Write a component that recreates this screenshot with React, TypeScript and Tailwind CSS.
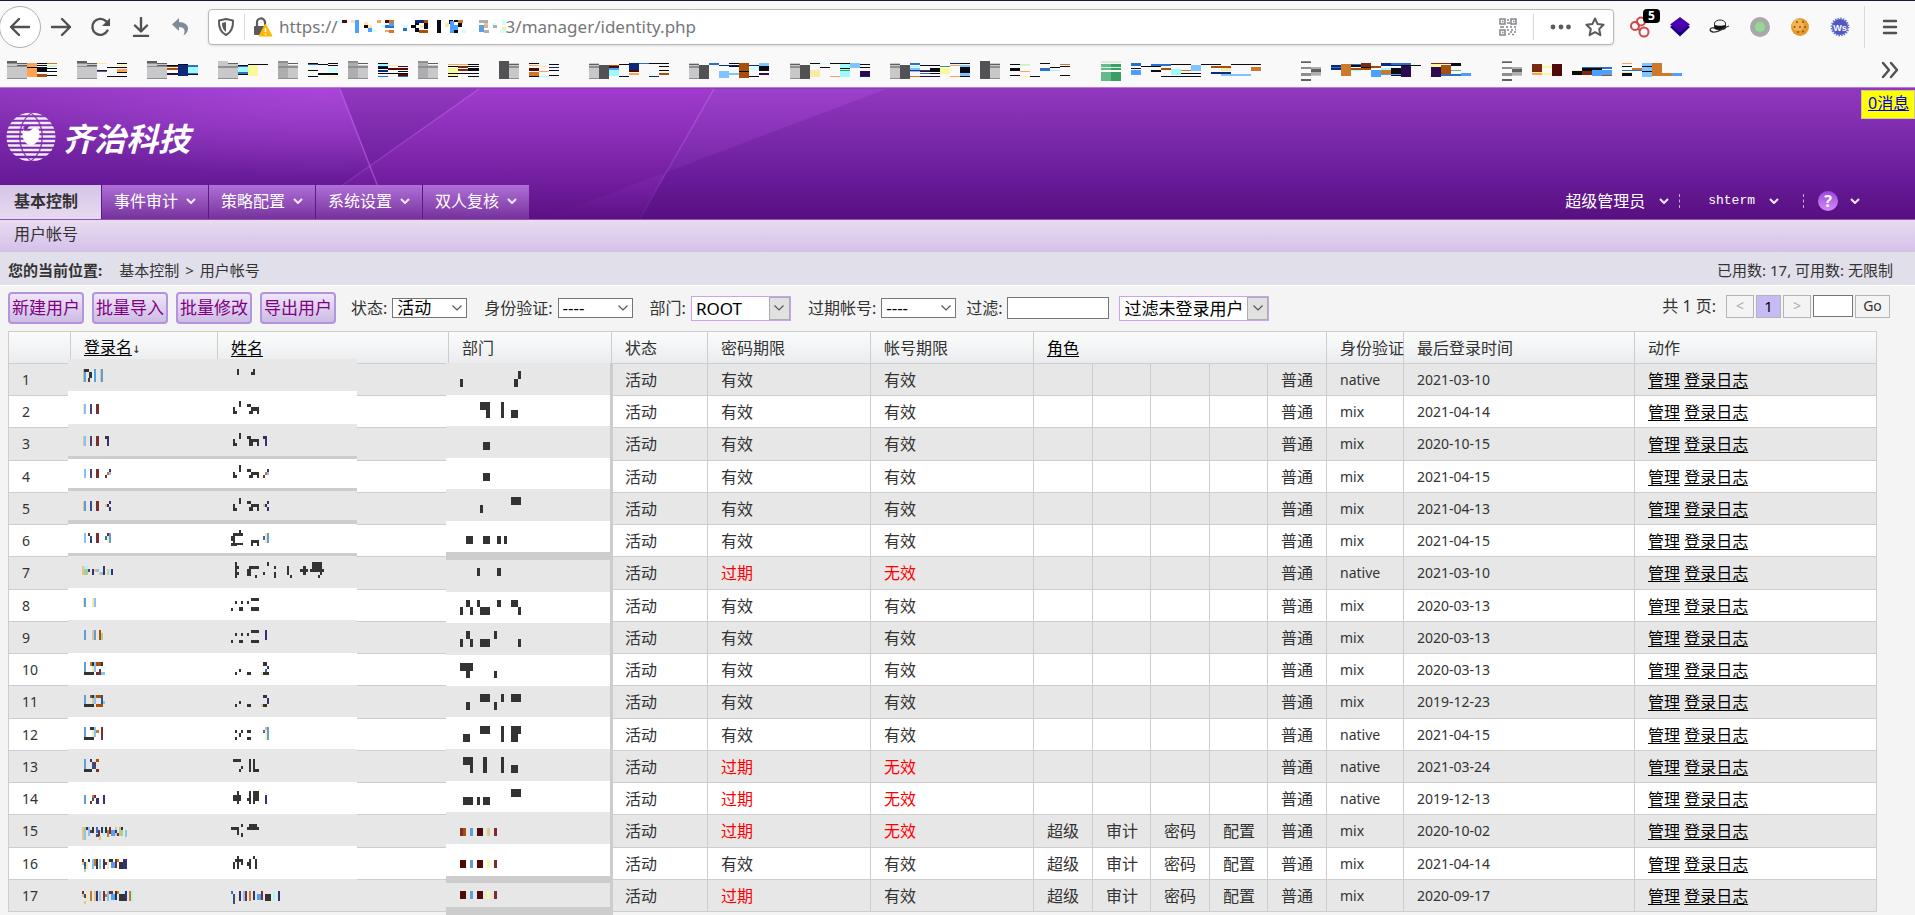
import React from "react";

/* ---------- pixel mosaics ---------- */

const PALETTE: Record<string, string> = {
  k: "#333333", K: "#0a0a12", b: "#5b9fdc", l: "#7fc4ff", L: "#4da0ff", m: "#7a2f2f", n: "#2f4f8f",
  N: "#0b2a7a", y: "#fde9a6", Y: "#faf89c", o: "#cc7a2a", O: "#ffa352", v: "#34307a", V: "#2a0a50",
  c: "#a0fafa", C: "#d0ffff", g: "#b0cc90", r: "#7a2a10", R: "#500a0a", B: "#a8500a", t: "#2a70c8",
  w: "#ffffff", e: "#e7e7e7", d: "#cdcdcd", s: "#525254", S: "#8f8f8f", f: "#c8c8ca", F: "#aeaeb0",
  p: "#ddb0a0", G: "#66b98a", H: "#3a9e62", h: "#d8eedd", i: "#89c6e8", u: "#e5c48f", x: "#5f5f61",
};

/* Each entry is "<colour> x y w h", entries separated by commas. */
function Pixels({ data }: { data: string }) {
  return (
    <>
      {data.split(",").map((entry, i) => {
        const [c, x, y, w, h] = entry.trim().split(" ");
        return <rect key={i} x={x} y={y} width={w} height={h} fill={PALETTE[c]} />;
      })}
    </>
  );
}

const FOLDER = "x 0 0 10 2,x 10 2 10 1,f 0 3 20 14,S 0 2 10 1,S 0 5 20 1,x 10 4 10 1,S 0 17 20 1,f 10 3 10 1";
const FOLDER_LIGHT = "f 0 0 10 3,f 0 3 20 14,x 10 2 10 1,S 0 5 20 2,S 0 17 20 1";
const FOLDER_HALF = "S 0 0 10 2,F 0 2 10 15,x 10 2 10 1,f 10 4 10 13,S 0 5 20 2,S 0 17 20 1";
const FOLDER_DARK = "s 0 0 10 18,f 10 2 10 16,x 10 3 10 1,S 10 5 10 2,S 10 17 10 1";
const FOLDER_SPLIT = "f 0 2 10 16,x 0 3 10 1,S 0 5 10 2,S 0 17 10 1,s 10 4 10 14";
const PAGE = "S 0 0 10 2,x 0 1 10 1,S 0 6 10 2,F 10 6 10 8,x 10 8 10 3,f 10 14 10 1,S 0 12 10 3,x 0 18 10 2";

const BOOKMARKS: { w: number; data: string }[] = [
  { w: 70, data: FOLDER + ",O 20 2 10 14,K 20 6 10 1,K 30 2 20 1,K 30 4 20 1,o 40 2 10 1,Y 40 4 10 1,K 30 6 10 4,K 40 7 10 1,K 30 10 20 1,w 30 11 20 1,B 30 13 10 3,K 40 14 10 1,c 40 5 10 1" },
  { w: 70, data: FOLDER + ",y 20 2 10 1,K 40 2 10 1,K 30 6 10 1,Y 40 4 10 1,O 40 8 10 3,K 40 6 10 1,t 20 9 10 2,R 20 9 10 1,K 40 11 10 1,K 30 15 20 1" },
  { w: 71, data: FOLDER + ",r 20 4 11 2,B 20 7 11 2,N 31 3 10 12,K 20 4 11 1,w 20 9 11 3,V 20 12 11 2,t 41 4 10 2,c 41 6 10 6,t 41 12 10 1,K 41 13 10 1,K 31 3 10 1" },
  { w: 60, data: FOLDER_LIGHT + ",t 20 4 10 2,c 20 6 10 5,t 20 11 10 2,K 20 4 10 1,K 20 13 10 1,K 30 3 20 1,Y 30 4 10 11" },
  { w: 70, data: FOLDER_HALF + ",t 30 2 10 2,K 30 2 10 1,K 40 3 10 1,K 50 2 10 1,K 50 4 10 1,K 30 9 10 1,C 50 7 10 4,K 40 12 20 2,K 30 15 10 1,Y 50 15 10 1" },
  { w: 70, data: FOLDER_HALF + ",K 30 2 10 1,c 30 3 10 2,N 30 5 10 1,K 30 6 10 2,R 40 7 20 2,y 40 4 10 1,R 50 5 10 1,N 30 9 10 2,K 30 12 30 1,R 50 13 10 2,t 30 15 10 1,t 50 15 10 1,K 50 10 10 1" },
  { w: 81, data: FOLDER_HALF + ",O 30 3 20 1,K 30 5 31 1,K 50 3 11 1,Y 30 7 10 8,r 40 5 10 2,K 50 7 11 3,r 40 8 10 2,K 30 12 31 1,K 30 15 10 1,K 50 15 11 1" },
  { w: 90, data: FOLDER_DARK + ",K 30 2 10 1,O 30 4 10 1,C 40 2 10 1,K 50 3 10 1,y 40 5 10 1,N 50 6 10 1,R 30 7 10 3,K 50 9 10 1,O 40 10 10 1,o 30 11 10 4,K 50 14 10 1,K 30 15 10 1,c 40 15 10 1" },
  { w: 100, data: FOLDER_SPLIT + ",B 20 4 10 1,R 20 5 10 2,L 20 7 10 2,c 20 9 10 6,K 30 3 10 1,N 40 2 10 7,R 40 9 10 2,O 40 12 10 2,t 50 2 20 1,K 60 2 20 1,K 70 5 10 1,K 70 9 10 1,B 70 12 10 2,K 30 15 10 1,N 60 15 10 1" },
  { w: 101, data: FOLDER_SPLIT + ",t 20 2 10 2,N 30 4 20 1,K 40 2 10 1,K 40 5 10 1,l 30 10 10 7,l 40 12 10 2,B 50 2 10 15,K 50 10 10 1,N 60 4 10 1,C 60 6 10 3,l 70 2 10 3,K 70 5 10 5,K 60 15 10 1,V 70 12 10 2" },
  { w: 100, data: FOLDER_SPLIT + ",K 20 2 10 1,C 30 2 10 1,K 30 6 10 1,y 20 9 10 7,K 40 2 20 1,c 50 3 10 13,K 50 7 10 1,H 50 9 10 1,l 60 2 10 5,O 40 15 10 1,K 70 3 10 1,K 70 6 10 1,V 70 10 10 5,N 70 15 10 1" },
  { w: 90, data: FOLDER_SPLIT + ",t 20 2 10 2,c 20 5 10 1,l 20 7 10 4,v 20 9 20 1,K 30 4 20 1,R 30 10 10 1,t 30 12 10 1,K 40 7 10 4,H 50 5 10 1,Y 50 7 10 6,K 40 12 10 1,O 60 4 10 1,K 70 2 10 1,l 70 4 10 2,K 70 6 10 6,N 60 2 10 1,o 20 15 10 1,V 30 15 20 1,O 60 15 10 1,l 70 12 10 3,K 70 15 10 1" },
  { w: 121, data: FOLDER_DARK + ",K 30 3 10 1,y 40 4 10 1,c 40 3 10 1,K 60 2 10 1,K 30 7 10 3,O 40 10 10 1,t 60 7 10 3,K 70 6 10 1,o 80 3 10 1,K 80 5 10 1,Y 40 15 10 1,K 30 14 10 1,K 50 15 10 1,c 70 9 10 1,K 80 14 10 1" },
  { w: 200, data: "h 0 0 20 2,G 0 3 20 3,H 10 3 10 3,h 0 6 20 1,G 0 7 20 2,H 10 7 10 2,G 0 11 20 9,H 10 11 10 9,t 30 2 10 3,K 30 7 10 1,L 30 9 10 5,K 40 5 20 1,t 50 3 20 2,K 50 9 10 2,B 60 7 10 2,K 70 3 20 1,c 70 8 10 6,o 80 9 20 1,K 80 12 20 1,l 90 4 10 6,K 100 3 20 1,B 110 5 20 2,y 120 7 10 3,N 110 11 20 2,K 130 3 30 1,l 120 13 30 2,o 150 6 10 4,K 60 15 40 1" },
  { w: 201, data: PAGE + ",N 30 4 10 5,t 30 6 10 1,o 40 3 10 12,t 50 3 10 1,K 50 4 10 2,B 50 7 20 2,c 50 9 10 1,K 60 5 20 2,r 60 2 10 4,l 70 9 10 6,B 70 5 10 2,N 80 2 20 3,c 80 7 10 3,o 80 9 10 4,L 70 9 10 7,K 90 7 10 8,V 100 5 10 11,t 90 2 20 2,K 100 4 20 1,L 80 13 20 1,V 130 4 10 12,Y 130 3 10 3,r 130 2 20 1,B 140 4 10 9,K 150 2 10 3,G 150 9 10 1,t 140 13 20 2,L 160 12 10 3" },
  { w: 201, data: PAGE + ",r 30 3 10 8,y 30 11 10 2,O 30 12 10 2,Y 40 5 10 2,Y 40 12 10 2,R 50 3 10 12,Y 70 9 10 1,K 70 10 10 4,t 80 6 30 2,K 80 7 20 3,r 80 10 10 4,L 90 9 20 6,B 100 14 10 1,O 120 2 10 1,K 120 5 10 1,t 120 9 20 1,y 120 11 10 1,K 120 12 10 3,o 130 7 10 2,l 140 2 10 14,K 140 5 10 1,K 140 10 10 1,o 150 2 10 13,o 160 12 10 3,L 170 12 10 3" },
];

const URL_MASK =
  "C 0 2 4 3,R 4 2 5 3,y 13 2 4 3,L 17 2 4 13,K 26 7 4 3,y 26 4 4 3,L 30 10 4 4,y 30 7 4 3,O 39 2 4 3,C 34 12 5 2,C 43 7 4 3,R 47 2 4 3,o 51 2 5 3,t 47 7 9 3,L 51 5 5 3,O 47 12 4 2,o 51 12 5 3,C 65 7 5 3,t 65 10 4 3,K 73 7 5 3,K 77 3 4 4,K 77 10 4 4,N 77 2 9 3,B 86 2 4 3,K 86 5 4 6,y 82 7 4 3,B 81 12 9 3,K 99 2 4 13,y 107 5 4 4,K 111 2 4 4,L 112 3 4 12,K 116 2 4 2,L 116 7 4 7,o 120 2 5 3,K 120 5 4 4,C 124 12 4 3,K 116 12 4 3,F 141 2 9 3,u 146 5 4 3,b 141 7 5 7,p 146 7 4 3,F 146 12 5 3,C 154 5 4 3,F 155 7 4 3,C 164 2 5 5,y 164 9 4 3,C 162 12 6 3";

/* masked name and department columns */
const MASK_BACKGROUND =
  "e 68 359 289 32,w 68 391 289 33,e 68 424 289 32,d 68 456 289 3,w 68 459 289 29,d 68 488 289 3,e 68 491 289 29,d 68 520 289 4,w 68 524 289 29,d 68 553 289 3,e 68 556 289 32,w 68 588 289 32,e 68 620 289 33,w 68 653 289 32,e 68 685 289 32,w 68 717 289 32,e 68 749 289 33,w 68 782 289 32,e 68 814 289 32,w 68 846 289 33,e 68 879 289 32," +
  "e 446 363 164 32,w 446 395 164 31,e 446 426 164 32,w 446 458 164 31,e 446 489 164 32,w 446 521 164 31,d 446 552 164 8,e 446 560 164 32,w 446 592 164 31,e 446 623 164 32,w 446 655 164 31,e 446 686 164 31,w 446 717 164 32,e 446 749 164 32,w 446 781 164 31,e 446 812 164 32,w 446 844 164 32,d 446 876 164 7,e 446 883 164 24,d 446 907 164 8,d 610 363 3 552";

const MASK_TOP =
  "g 204 417 2 39,b 206 417 5 39,k 206 417 12 9,k 218 426 7 17,m 216 443 5 13,C 225 426 5 30,b 230 417 5 39,u 244 417 3 39,b 247 417 5 39,k 581 417 5 18,k 615 426 10 9,k 620 417 5 18,k 1127 447 7 24,k 1259 447 9 24,k 1269 423 7 24," +
  "y 204 522 2 30,l 206 522 5 30,n 220 522 5 30,m 221 533 4 9,m 235 522 8 30,k 571 530 5 22,k 576 543 5 9,k 586 513 4 17,k 605 522 10 9,k 610 543 10 9,k 615 530 20 12,k 629 530 6 22,k 1176 516 24 24,k 1190 540 10 24,k 1227 516 8 48,k 1252 540 17 24," +
  "u 203 618 3 30,l 206 618 5 30,n 220 618 5 30,m 221 628 4 10,m 235 618 8 30,k 257 618 10 10,v 262 618 5 30,k 571 628 5 20,k 576 639 5 9,k 586 609 4 18,k 605 618 10 10,k 610 628 10 20,k 615 628 20 9,k 629 628 6 20,k 644 618 5 10,v 649 618 5 30,k 1183 636 17 24";
const MASK_MIDDLE =
  "l 206 27 5 27,n 220 27 5 27,m 221 36 4 9,m 235 27 8 27,v 267 27 5 9,o 262 36 5 9,m 257 45 5 9,l 267 36 5 9,k 571 37 5 17,k 576 45 5 9,k 586 15 4 20,k 605 27 10 9,k 610 45 10 9,k 615 36 20 9,k 629 36 6 18,m 644 45 5 9,o 649 36 5 9,v 654 27 5 9,l 654 36 5 9,k 1183 39 17 24," +
  "u 203 123 3 30,b 206 123 5 30,n 220 123 5 30,m 235 123 8 30,u 257 132 5 9,k 262 132 5 9,v 267 123 5 9,v 267 141 5 12,k 571 132 5 21,k 576 144 5 9,k 586 114 4 18,k 605 123 10 9,k 610 141 10 12,k 615 132 20 9,k 629 132 6 21,u 644 132 5 9,k 649 132 5 9,v 654 123 5 9,v 654 141 5 12,k 1176 135 7 24,k 1252 111 24 24," +
  "l 206 219 5 30,m 216 219 4 9,n 220 228 5 12,v 220 240 5 9,m 235 219 8 30,m 262 219 5 9,t 257 228 5 12,Y 262 228 5 21,b 267 219 5 30,k 571 219 24 9,k 566 228 10 14,k 571 240 5 9,k 566 249 15 9,k 576 249 19 6,k 586 210 4 10,k 615 240 20 9,k 615 249 5 9,k 629 249 6 9,t 644 228 5 12,y 649 219 5 30,b 654 219 5 30,k 1142 228 17 24,k 1183 228 17 24,k 1218 228 9 24,k 1235 228 7 24," +
  "u 201 318 5 27,c 206 318 10 9,g 206 327 10 18,n 216 327 4 9,v 225 327 5 18,u 230 327 5 9,i 235 327 8 9,u 243 336 5 9,v 252 318 5 27,l 247 336 5 9,u 262 327 5 18,c 267 327 5 18,v 272 327 5 18,k 576 306 5 48,k 581 318 5 9,k 581 336 5 9,k 605 327 10 20,k 610 318 25 9,k 625 345 5 9,k 654 306 5 12,k 644 336 5 9,k 671 318 5 9,k 671 336 5 18,k 702 318 5 27,k 710 345 5 9,k 736 327 19 9,k 743 318 6 27,k 760 327 34 9,k 764 306 25 30,k 784 336 5 9,k 779 345 5 9,k 1169 324 7 24,k 1218 324 9 24," +
  "y 204 414 2 27,b 206 414 5 27,y 225 414 5 27,l 230 414 5 27,k 576 423 5 9,k 590 423 5 9,k 605 423 5 9,k 615 414 20 9,k 566 444 5 9,k 586 441 9 12,k 615 441 20 12,k 1127 441 7 24,k 1142 420 9 21,k 1151 441 8 24,k 1169 420 7 21,k 1176 441 24 24,k 1218 420 9 21,k 1252 420 17 21,k 1269 441 7 24," +
  "b 206 510 5 30,u 225 510 5 30,b 230 510 5 30,B 243 510 4 30,g 247 519 5 21,k 576 519 5 9,k 590 519 5 9,k 605 519 5 9,k 615 510 20 9,k 566 540 5 9,k 586 540 9 9,k 615 540 20 9,v 649 510 5 30,k 1127 537 7 24,k 1142 513 9 24,k 1151 537 8 24,k 1176 537 24 24,k 1210 513 8 24,k 1269 537 7 24," +
  "b 206 606 5 30,k 206 636 24 9,o 220 606 5 12,k 225 606 5 12,y 225 618 5 18,l 230 606 5 30,B 235 606 12 12,m 243 627 5 9,k 247 606 5 12,C 247 618 10 9,m 235 636 12 9,l 247 636 10 9,k 576 636 5 9,k 586 627 4 9,k 605 636 10 9,k 644 606 10 12,v 654 618 5 9,t 649 627 5 9,y 639 636 5 9,k 644 636 15 9,k 1127 609 32 24,k 1142 633 9 21,k 1210 633 8 21";
const MASK_BOTTOM =
  "b 206 15 5 27,k 206 42 24 9,B 220 15 5 9,k 225 15 5 9,u 225 24 5 18,l 230 15 5 27,B 235 15 12 9,n 247 15 5 27,i 252 33 5 9,B 235 42 17 9,k 576 42 5 9,k 586 33 4 9,k 605 42 10 9,k 644 15 10 9,v 654 24 5 18,u 639 42 5 9,k 644 42 10 9,k 1142 36 9 24,k 1176 12 24 24,k 1210 36 8 24,k 1227 12 8 24,k 1252 12 24 24," +
  "b 206 111 5 30,k 206 141 24 9,k 220 111 10 9,y 225 120 5 21,l 230 111 5 30,o 235 120 8 9,m 247 111 5 39,k 576 120 5 9,k 586 129 4 12,k 590 120 5 9,k 576 141 5 9,k 605 120 10 9,k 605 141 10 9,t 644 120 5 9,p 649 111 5 9,Y 649 120 5 30,b 654 111 5 39,k 1134 132 17 24,k 1176 108 24 24,k 1227 108 8 48,k 1252 108 17 48,k 1269 108 7 24," +
  "b 206 207 5 30,k 206 237 19 9,v 220 207 5 9,n 225 216 5 21,B 235 207 8 9,m 230 216 5 12,n 230 228 5 9,m 235 237 8 9,k 571 207 19 9,k 590 228 5 9,k 586 237 4 9,k 610 207 5 39,k 620 207 5 39,k 625 237 10 9,k 1134 201 25 24,k 1151 225 8 24,k 1183 201 10 48,k 1227 201 8 48,k 1252 225 17 24," +
  "b 206 315 5 27,m 220 333 5 9,o 225 315 5 9,n 225 324 5 9,m 230 315 5 9,v 235 324 8 9,v 235 333 8 9,v 252 315 5 27,k 571 315 19 18,k 581 303 5 39,k 605 324 5 9,k 610 303 5 39,k 620 303 15 30,k 620 333 5 9,v 649 315 5 27,k 1134 321 25 24,k 1169 321 7 24,k 1183 321 17 24,k 1252 297 24 24," +
  "u 201 411 5 39,g 206 411 5 9,i 206 420 5 30,k 211 411 5 9,l 216 411 5 27,m 220 420 5 9,k 225 411 5 18,t 235 411 5 18,m 240 420 5 21,v 247 411 5 18,c 252 411 5 27,k 257 411 5 18,o 262 420 5 20,m 267 411 5 20,L 272 420 10 18,u 282 411 5 27,v 282 420 5 9,m 287 429 5 9,g 292 411 10 27,k 297 411 5 9,i 306 420 5 21,n 235 432 5 9,u 243 438 5 12,k 566 411 20 9,k 590 402 5 9,k 581 420 5 15,k 590 429 5 12,k 610 402 20 9,k 605 411 30 9,B 1127 414 14 24,m 1127 414 7 24,b 1151 414 8 24,R 1169 414 14 24,u 1193 414 7 24,m 1210 414 8 24," +
  "m 201 507 5 9,u 201 516 5 9,n 206 516 5 12,y 211 516 5 21,v 216 507 4 9,l 225 507 5 30,k 235 507 5 30,o 230 507 5 21,i 243 507 5 30,v 252 507 5 30,m 257 516 5 9,y 262 507 5 30,k 267 507 10 9,L 272 516 10 18,m 282 507 5 27,o 287 507 5 9,k 292 516 15 21,v 302 507 9 30,t 206 528 5 9,u 206 537 5 9,k 581 498 5 39,k 571 516 5 21,k 576 507 19 9,k 590 516 5 9,k 605 516 5 12,k 610 507 5 30,k 625 507 5 30,k 620 498 5 9,R 1127 510 14 24,b 1151 510 8 24,R 1169 510 14 24,Y 1193 510 7 24,m 1210 510 8 24," +
  "m 201 603 5 9,u 201 612 5 9,n 206 612 5 12,y 211 612 5 21,o 220 603 5 30,u 230 603 5 30,v 235 603 5 30,i 243 603 5 30,m 252 603 5 30,o 257 612 5 9,l 262 603 5 30,m 267 603 10 9,L 272 612 10 18,k 282 603 5 27,o 287 603 5 9,k 292 612 15 21,c 302 603 5 9,v 306 603 5 30,o 316 603 5 30,c 321 603 5 30,u 206 633 5 9,t 566 603 5 9,n 571 612 5 30,y 576 612 5 21,v 586 603 5 30,l 596 603 5 30,m 601 603 5 30,o 610 603 5 30,v 620 603 5 27,L 630 612 10 18,m 640 603 5 27,k 650 612 15 21,c 668 603 5 30,v 681 603 5 30,R 1127 603 14 24,b 1151 603 8 24,R 1169 603 14 24,Y 1193 603 7 24,m 1210 603 8 24";

function NameMask() {
  return (
    <svg aria-hidden="true" className="pointer-events-none absolute top-7 left-[60px]" width="546" height="556" viewBox="68 359 546 556" shapeRendering="crispEdges">
      <Pixels data={MASK_BACKGROUND} />
      <g transform="translate(0 230) scale(0.4082 0.3333)"><Pixels data={MASK_TOP} /></g>
      <g transform="translate(0 460) scale(0.4082 0.3333)"><Pixels data={MASK_MIDDLE} /></g>
      <g transform="translate(0 690) scale(0.4082 0.3333)"><Pixels data={MASK_BOTTOM} /></g>
    </svg>
  );
}

/* ---------- browser chrome ---------- */

function ToolButton({ label, children }: { label: string; children: React.ReactNode }) {
  return (
    <button aria-label={label} className="relative flex h-10 w-10 shrink-0 items-center justify-center">
      {children}
    </button>
  );
}

const stroke = { fill: "none", stroke: "#505052", strokeWidth: 2.4, strokeLinecap: "round", strokeLinejoin: "round" } as const;

function BrowserToolbar() {
  return (
    <div className="flex h-[51px] items-center">
      <button aria-label="后退" className="-ml-px flex h-[42px] w-[42px] shrink-0 items-center justify-center rounded-full border border-[#b0b0b0] bg-white">
        <svg width="22" height="20" viewBox="0 0 22 20" {...stroke}><path d="M20 10H2M10 2 2 10l8 8" /></svg>
      </button>
      <ToolButton label="前进">
        <svg width="22" height="20" viewBox="0 0 22 20" {...stroke}><path d="M2 10h18M12 2l8 8-8 8" /></svg>
      </ToolButton>
      <ToolButton label="刷新">
        <svg width="22" height="20" viewBox="0 0 22 20" {...stroke}>
          <path d="M17.5 13.5A8 8 0 1 1 16 4.2L19 7" />
          <path d="M20 1v8h-8z" fill="#505052" stroke="none" />
        </svg>
      </ToolButton>
      <ToolButton label="下载">
        <svg width="18" height="20" viewBox="0 0 18 20" {...stroke}><path d="M9 1v13M3 8.500l6 6 6-6M2 19h14" /></svg>
      </ToolButton>
      <ToolButton label="撤销">
        <svg width="20" height="20" viewBox="0 0 20 20"><path d="M8 1 1 7.500l7 6.500v-4c5 0 7 3 4.500 8.500C19 15 19.500 5.500 8 5z" fill="#7f8b99" /></svg>
      </ToolButton>
      <div className="ml-[7px] flex h-9 flex-1 items-center rounded-sm border border-[#b8b8ba] bg-white shadow-sm">
        <svg className="ml-2" width="18" height="20" viewBox="0 0 18 20">
          <path d="M9 2 16 3.500c.3 6-1 11.500-7 14.500-6-3-7.300-8.500-7-14.500z" fill="none" stroke="#5b5b5d" strokeWidth="2" strokeLinejoin="round" />
          <path d="M9 5v10c-3-2.200-4-5-4-9z" fill="#5b5b5d" />
        </svg>
        <span className="ml-[9px] h-[26px] w-px bg-[#d8d8da]" />
        <svg className="ml-2" width="20" height="20" viewBox="0 0 20 20">
          <path d="M4 9V6a4 4 0 0 1 8-1v3" fill="none" stroke="#5b5b5d" strokeWidth="2.200" />
          <rect x="1" y="9" width="12" height="9" rx="1" fill="#5b5b5d" />
          <path d="M12.500 7 19 19H6z" fill="#ffb700" stroke="#ffb700" strokeLinejoin="round" />
          <path d="M12.500 11v4M12.500 16.500v1.500" stroke="#fff" strokeWidth="1.600" />
        </svg>
        <span className="ml-1.5 flex flex-1 items-center font-['Noto_Sans',sans-serif] text-[17px] text-[#77777a]">
          https://
          <svg aria-hidden="true" width="168" height="18" viewBox="0 0 168 18" shapeRendering="crispEdges"><Pixels data={URL_MASK} /></svg>
          <span>3/manager/identity.php</span>
        </span>
        <svg width="18" height="18" viewBox="0 0 18 18" fill="none" stroke="#85858a" strokeWidth="1.500">
          <path d="M1 1h5v5H1zM12 1h5v5h-5zM1 12h5v5H1z" />
          <path d="M3 3.500h1.500M14 3.500h1.500M3 14.500h1.500M9 1v2M8 5h3M1 9h4M7 9h2M11 9h2M15 9h2M9 11v2M12 12h2M15 14h2M11 14h2M9 16h2M13 16.500h2M16 11.500h1" />
        </svg>
        <span className="ml-4 h-[26px] w-px bg-[#d8d8da]" />
        <button aria-label="更多" className="ml-4">
          <svg width="22" height="20" viewBox="0 0 22 20" fill="#5b5b5d"><circle cx="3" cy="10" r="2.400" /><circle cx="11" cy="10" r="2.400" /><circle cx="18.500" cy="10" r="2.400" /></svg>
        </button>
        <button aria-label="收藏" className="mr-[7px] ml-3">
          <svg width="22" height="22" viewBox="0 0 22 22"><path d="m11 2.500 2.600 5.600 6 .7-4.400 4.200 1.200 6.200-5.400-3-5.400 3L6.800 13 2.400 8.800l6-.7z" fill="none" stroke="#5b5b5d" strokeWidth="2" strokeLinejoin="round" /></svg>
        </button>
      </div>
      <div className="ml-1.5 flex">
        <ToolButton label="扩展">
          <svg width="22" height="22" viewBox="0 0 22 22" fill="none" stroke="#cc4a4a" strokeWidth="2"><circle cx="6" cy="10" r="4" /><circle cx="12" cy="5.500" r="4" /><circle cx="15" cy="16" r="4.500" /><path d="M8 13l4 1" /></svg>
          <span className="absolute top-0.5 left-[23px] h-3.5 w-[17px] rounded-sm bg-black text-center text-xs leading-[13px] font-bold text-white">5</span>
        </ToolButton>
        <ToolButton label="图层">
          <svg width="22" height="20" viewBox="0 0 22 20"><path d="m1 10 10 9.500L21 10l-4-3H5z" fill="#1c0076" /><path d="M11 0 21 7.500 11 15 1 7.500z" fill="#4a00b0" /></svg>
        </ToolButton>
        <ToolButton label="帽子">
          <svg width="22" height="16" viewBox="0 0 22 16"><path d="M5.500 9V4c1-4 10-4 11 0v5z" fill="#f4f4f4" stroke="#333" /><path d="M5.500 6c3 1 8 1 11 0v4c-3 1.500-8 1.500-11 0z" fill="#111" /><path d="M5.500 9C0 8 0 12 4 13c6 1 9-4 16-6" fill="none" stroke="#333" strokeWidth="1.300" /></svg>
        </ToolButton>
        <ToolButton label="状态灯">
          <svg width="20" height="20" viewBox="0 0 20 20"><circle cx="10" cy="10" r="10" fill="#a8a8a8" /><circle cx="10" cy="10" r="5" fill="#94da94" /></svg>
        </ToolButton>
        <ToolButton label="饼干">
          <svg width="20" height="20" viewBox="0 0 20 20"><circle cx="10" cy="10" r="9" fill="#e59a2e" /><circle cx="8" cy="8" r="6" fill="#f2b352" /><g fill="#8a5218"><circle cx="7" cy="5" r="1" /><circle cx="13" cy="5" r="1" /><circle cx="4.500" cy="10" r="1" /><circle cx="10" cy="10" r="1" /><circle cx="15" cy="10" r="1" /><circle cx="8" cy="15" r="1" /><circle cx="13" cy="14.500" r="1" /></g></svg>
        </ToolButton>
        <ToolButton label="Ws">
          <svg width="20" height="20" viewBox="0 0 20 20"><circle cx="10" cy="10" r="8" fill="#5158c0" /><circle cx="10" cy="10" r="8.600" fill="none" stroke="#6a70c8" strokeWidth="1.600" strokeDasharray="1.500 1.200" /><text x="10" y="13.500" textAnchor="middle" fontSize="9" fontWeight="700" fill="#fff" fontFamily="Liberation Sans, sans-serif">Ws</text></svg>
        </ToolButton>
      </div>
      <span className="ml-1 h-[42px] w-px bg-[#dadadc]" />
      <button aria-label="菜单" className="flex w-[50px] items-center justify-center">
        <svg width="16" height="16" viewBox="0 0 16 16" {...stroke}><path d="M2 2h12M2 8h12M2 14h12" /></svg>
      </button>
    </div>
  );
}

function BookmarksBar() {
  return (
    <div className="flex h-[35px] items-start pt-[9px] pl-[7px]">
      {BOOKMARKS.map((b, i) => (
        <button key={i} aria-label={"书签 " + (i + 1)} className="shrink-0">
          <svg width={b.w} height="21" viewBox={"0 0 " + b.w + " 21"} shapeRendering="crispEdges"><Pixels data={b.data} /></svg>
        </button>
      ))}
      <button aria-label="更多书签" className="mr-4 ml-auto">
        <svg width="18" height="18" viewBox="0 0 18 18" {...stroke}><path d="m2 2 6 7-6 7M10 2l6 7-6 7" /></svg>
      </button>
    </div>
  );
}

/* ---------- application header ---------- */

function Caret() {
  return <svg width="10" height="6" viewBox="0 0 10 6" fill="none" stroke="#f4ecfa" strokeWidth="2"><path d="M1 1l4 4 4-4" /></svg>;
}

function HeaderArt() {
  return (
    <svg aria-hidden="true" className="absolute inset-0" width="1400" height="132" viewBox="0 0 1400 132">
      <defs>
        <radialGradient id="glowLeft" cx="0.85" cy="0" r="0.9"><stop offset="0" stopColor="#b04ae0" stopOpacity="0.75" /><stop offset="1" stopColor="#b04ae0" stopOpacity="0" /></radialGradient>
        <linearGradient id="glowMid" x1="0" y1="0" x2="0" y2="1"><stop offset="0" stopColor="#b040dd" stopOpacity="0.5" /><stop offset="1" stopColor="#9020b0" stopOpacity="0.06" /></linearGradient>
        <linearGradient id="glowRight" x1="0" y1="0" x2="0" y2="1"><stop offset="0" stopColor="#b050e0" stopOpacity="0.35" /><stop offset="1" stopColor="#b050e0" stopOpacity="0" /></linearGradient>
        <linearGradient id="edge" gradientUnits="userSpaceOnUse" x1="0" y1="0" x2="0" y2="132"><stop offset="0" stopColor="#c070ea" stopOpacity="0.5" /><stop offset="1" stopColor="#c070ea" stopOpacity="0.05" /></linearGradient>
      </defs>
      <path d="M0 0h340l38 98H0z" fill="url(#glowLeft)" />
      <path d="M479 1h235l-75 131H520L340 98z" fill="url(#glowMid)" />
      <path d="M714 1h172L540 132h99z" fill="url(#glowRight)" />
      <path d="M340 1l38 98" stroke="#c070ea" strokeOpacity="0.5" strokeWidth="1.500" />
      <path d="M479 1 340 99M714 1l-75 131" stroke="url(#edge)" strokeWidth="1.500" />
    </svg>
  );
}

function Logo() {
  return (
    <div className="relative flex items-center gap-1.5 pt-6 pl-1.5">
      <svg aria-hidden="true" width="50" height="50" viewBox="0 0 50 50">
        <defs><clipPath id="globe"><circle cx="25" cy="25" r="24.500" /></clipPath></defs>
        <g clipPath="url(#globe)" stroke="#f3eafa" strokeWidth="2.500">
          <path d="M0 2h50M0 6.500h50M0 11h50M0 15.500h50M0 20h50M0 24.500h50M0 29h50M0 33.500h50M0 38h50M0 42.500h50M0 47.500h50" />
        </g>
        <path d="M25 1C10 12 10 38 25 49 40 38 40 12 25 1" fill="none" stroke="#7a2aaa" strokeWidth="1.500" strokeOpacity="0.8" />
        <path d="M17 18c3 2 5 3 8 0 3-3 6-3 8 0 2 8-2 15-8 15s-10-7-8-15z" fill="#fff" />
        <path d="M17 16c2-3 5-4 7-2-3 1-2 4-4 4z" fill="#7a2aaa" />
      </svg>
      <span className="font-['Noto_Sans_CJK_SC',sans-serif] text-[32px] leading-[48px] font-bold text-white italic">齐治科技</span>
    </div>
  );
}

const TABS = ["事件审计", "策略配置", "系统设置", "双人复核"];

function AppHeader() {
  return (
    <header className="relative flex h-[133px] flex-col justify-between overflow-hidden border-t border-b border-t-[#b878dc] border-b-[#8d55b0] bg-linear-to-b from-[#9138bf] via-[#681b98] via-70% to-[#580f80]">
      <HeaderArt />
      <Logo />
      <a href="#messages" className="absolute top-0.5 right-0 h-[29px] w-[54px] border border-[#c8c8a0] bg-[#ffff00] pl-1.5 text-base leading-6 text-[#0000ee] underline">0消息</a>
      <nav className="relative flex h-[34px] text-base whitespace-nowrap text-white">
        <a href="#basic" className="h-9 w-[101px] bg-linear-to-b from-[#d5c4e8] to-[#e8dcf1] pl-3.5 leading-8 font-bold text-[#333]">基本控制</a>
        {TABS.map((t) => (
          <a key={t} href={"#" + t} className="flex h-[34px] w-[107px] items-center gap-2 border-l border-[#5d1789] bg-linear-to-b from-[#b070d8] to-[#76319c] pb-0.5 pl-3">
            {t}
            <Caret />
          </a>
        ))}
        <div className="ml-auto flex items-center pr-[55px] pb-0.5">
          <button className="flex items-center gap-3.5">超级管理员<Caret /></button>
          <span className="ml-2.5 h-3.5 border-l border-dashed border-[#c9a8dc]" />
          <button className="ml-7 flex items-center gap-3.5 font-['Liberation_Mono',monospace] text-[13px]">shterm<Caret /></button>
          <span className="ml-6 h-3.5 border-l border-dashed border-[#c9a8dc]" />
          <button aria-label="帮助" className="ml-3.5 flex items-center gap-3">
            <span className="flex h-5 w-5 items-center justify-center rounded-full bg-linear-to-b from-[#9a48dc] to-[#d58af8] text-base leading-5 font-bold">?</span>
            <Caret />
          </button>
        </div>
      </nav>
    </header>
  );
}

/* ---------- filters ---------- */

function Field({ id, label, value, box, purple }: { id: string; label?: string; value: string; box: string; purple?: boolean }) {
  return (
    <div className="flex items-center gap-[5px]">
      {label && <label htmlFor={id} className="text-base text-[#333]">{label}</label>}
      <div className={"relative " + box}>
        <select id={id} aria-label={label ?? value} className={purple ? "block h-[25px] w-full appearance-none border border-[#c9a2f5] bg-white pl-1 text-[17px] leading-[23px] text-black" : "block h-5 w-full appearance-none border border-[#767676] bg-white pl-1 text-[17px] leading-[18px] text-black"}>
          <option>{value}</option>
        </select>
        <span className={purple ? "pointer-events-none absolute top-px right-px flex h-[23px] w-[21px] items-center justify-center border border-[#adadad] bg-[#e1e1e1]" : "pointer-events-none absolute top-0 right-1 flex h-5 w-3 items-center justify-center"}>
          <svg width="10" height="6" viewBox="0 0 10 6" fill="none" stroke="#555" strokeWidth="1.200"><path d="M.5.5 5 5 9.500.5" /></svg>
        </span>
      </div>
    </div>
  );
}

function Toolbar() {
  return (
    <div className="flex h-[45px] justify-between pr-[25px] pl-2 whitespace-nowrap">
      <div className="flex h-11 items-center">
        <div className="flex gap-2">
          {["新建用户", "批量导入", "批量修改", "导出用户"].map((t) => (
            <button key={t} className="h-8 w-[76px] rounded-sm border-2 border-[#b295dc] bg-linear-to-b from-[#eee6f8] to-[#cdbbe4] text-[17px] leading-7 text-[#800080]">{t}</button>
          ))}
        </div>
        <div className="ml-[15px] flex items-center gap-[17px]">
          <Field id="status" label="状态:" value="活动" box="w-[75px]" />
          <Field id="auth" label="身份验证:" value="----" box="w-[75px]" />
          <Field id="dept" label="部门:" value="ROOT" box="w-[100px]" purple />
          <Field id="expired" label="过期帐号:" value="----" box="w-[75px]" />
        </div>
        <div className="ml-2.5 flex items-center gap-[5px]">
          <label htmlFor="filter" className="text-base text-[#333]">过滤:</label>
          <input id="filter" className="h-[22px] w-[102px] border border-[#767676] bg-white" />
        </div>
        <div className="ml-2.5">
          <Field id="never" value="过滤未登录用户" box="w-[150px]" purple />
        </div>
      </div>
      <div className="flex h-10 items-center gap-0.5 text-base text-[#333]">
        <label htmlFor="page" className="mr-2">共 1 页:</label>
        <button className="h-[23px] w-7 border border-[#b4b4b4] text-sm leading-5 text-[#aaa]">&lt;</button>
        <button className="h-[23px] w-[25px] border border-[#b4b4b4] bg-[#c8bbf5] text-[15px] leading-5 text-black">1</button>
        <button className="h-[23px] w-7 border border-[#b4b4b4] text-sm leading-5 text-[#aaa]">&gt;</button>
        <input id="page" className="h-[22px] w-10 border border-[#767676] bg-white" />
        <button className="h-[23px] w-[35px] border border-[#b4b4b4] text-sm leading-5">Go</button>
      </div>
    </div>
  );
}

/* ---------- user table ---------- */

const COLUMNS = ["w-[62px]", "w-[147px]", "w-[231px]", "w-[163px]", "w-[96px]", "w-[163px]", "w-[163px]", "w-[59px]", "w-[58px]", "w-[59px]", "w-[58px]", "w-[59px]", "w-[77px]", "w-[231px]", "w-[242px]"];

/* password state, account state, all roles, authentication, last login */
const USERS: [boolean, boolean, boolean, string, string][] = [
  [true, true, false, "native", "2021-03-10"],
  [true, true, false, "mix", "2021-04-14"],
  [true, true, false, "mix", "2020-10-15"],
  [true, true, false, "mix", "2021-04-15"],
  [true, true, false, "mix", "2021-04-13"],
  [true, true, false, "mix", "2021-04-15"],
  [false, false, false, "native", "2021-03-10"],
  [true, true, false, "mix", "2020-03-13"],
  [true, true, false, "mix", "2020-03-13"],
  [true, true, false, "mix", "2020-03-13"],
  [true, true, false, "mix", "2019-12-23"],
  [true, true, false, "native", "2021-04-15"],
  [false, false, false, "native", "2021-03-24"],
  [false, false, false, "native", "2019-12-13"],
  [false, false, true, "mix", "2020-10-02"],
  [true, true, true, "mix", "2021-04-14"],
  [false, true, true, "mix", "2020-09-17"],
];

const CELL = "border border-[#cdcdcd] py-0 pr-0 pl-[13px]";
const LINK = "text-black underline underline-offset-2";

function UserTable() {
  const head = CELL + " text-left font-normal";
  const latin = CELL + " text-sm";
  return (
    <div className="relative mr-[38px] ml-2">
      <table className="w-full table-fixed border-collapse text-base leading-5 whitespace-nowrap text-[#333]">
        <colgroup>{COLUMNS.map((c, i) => <col key={i} className={c} />)}</colgroup>
        <thead>
          <tr className="h-8 bg-linear-to-b from-[#fbfbfb] via-[#f3f4f5] to-[#eaecef]">
            <th className={head}></th>
            <th className={head}><a href="#login" className={LINK}>登录名</a><span className="font-['DejaVu_Sans_Mono',monospace] text-sm">↓</span></th>
            <th className={head}><a href="#name" className={LINK}>姓名</a></th>
            <th className={head}>部门</th>
            <th className={head}>状态</th>
            <th className={head}>密码期限</th>
            <th className={head}>帐号期限</th>
            <th className={head} colSpan={5}><a href="#role" className={LINK}>角色</a></th>
            <th className={head}>身份验证</th>
            <th className={head}>最后登录时间</th>
            <th className={head}>动作</th>
          </tr>
        </thead>
        <tbody>
          {USERS.map(([pw, acc, roles, auth, last], i) => (
            <tr key={i} className={(i % 4 === 2 ? "h-[33px]" : "h-8") + (i % 2 === 0 ? " bg-[#e7e7e7]" : " bg-white")}>
              <td className={latin}>{i + 1}</td>
              <td className={CELL}></td>
              <td className={CELL}></td>
              <td className={CELL}></td>
              <td className={CELL}>活动</td>
              <td className={pw ? CELL : CELL + " text-[#ff0000]"}>{pw ? "有效" : "过期"}</td>
              <td className={acc ? CELL : CELL + " text-[#ff0000]"}>{acc ? "有效" : "无效"}</td>
              {["超级", "审计", "密码", "配置"].map((r) => <td key={r} className={CELL}>{roles ? r : ""}</td>)}
              <td className={CELL}>普通</td>
              <td className={latin}>{auth}</td>
              <td className={latin}>{last}</td>
              <td className={CELL}><a href="#manage" className={LINK}>管理</a> <a href="#log" className={LINK}>登录日志</a></td>
            </tr>
          ))}
        </tbody>
      </table>
      <NameMask />
    </div>
  );
}

export default function App() {
  return (
    <div className="min-h-screen bg-[#f4f4f4] font-['Noto_Sans','Noto_Sans_CJK_SC',sans-serif]">
      <div className="border-t border-[#1a1a30] bg-[#f9f9fa]">
        <BrowserToolbar />
        <BookmarksBar />
      </div>
      <AppHeader />
      <div className="h-8 bg-linear-to-b from-[#e9dcf1] to-[#d3c1e8] pl-3.5 text-base leading-7 text-[#333]">
        <a href="#users">用户帐号</a>
      </div>
      <div className="flex h-[34px] items-center justify-between border-b border-white bg-[#e1dfe9] pt-1 pr-[22px] pl-2 text-[15px] text-[#333]">
        <div className="flex gap-[17px]">
          <strong>您的当前位置:</strong>
          <span className="flex gap-1.5"><span>基本控制</span><span>&gt;</span><span>用户帐号</span></span>
        </div>
        <span>已用数: 17, 可用数: 无限制</span>
      </div>
      <Toolbar />
      <UserTable />
    </div>
  );
}
